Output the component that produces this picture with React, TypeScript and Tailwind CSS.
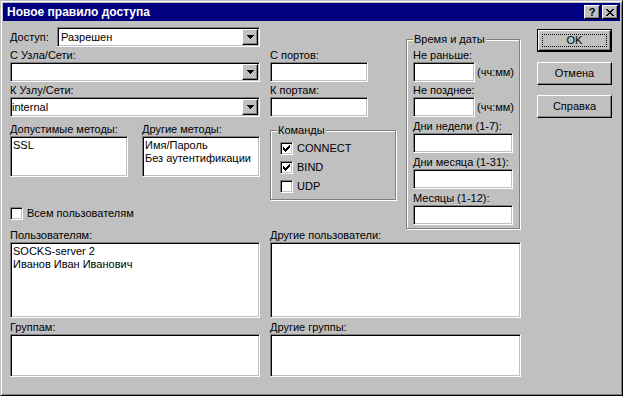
import React from "react";

const SUNKEN =
  "border border-t-[#808080] border-l-[#808080] border-r-white border-b-white shadow-[inset_1px_1px_0_#000,inset_-1px_-1px_0_#c0c0c0] bg-white";
const RAISED =
  "border border-t-white border-l-white border-r-black border-b-black shadow-[inset_-1px_-1px_0_#808080] bg-[#c0c0c0]";
const GROUP =
  "relative border border-[#808080] shadow-[1px_1px_0_#fff,inset_1px_1px_0_#fff]";

function Arrow() {
  return (
    <svg width="7" height="4" viewBox="0 0 7 4" shapeRendering="crispEdges">
      <rect x="0" y="0" width="7" height="1" />
      <rect x="1" y="1" width="5" height="1" />
      <rect x="2" y="2" width="3" height="1" />
      <rect x="3" y="3" width="1" height="1" />
    </svg>
  );
}

function CheckMark() {
  return (
    <svg width="7" height="7" viewBox="0 0 7 7" shapeRendering="crispEdges">
      {[2, 3, 4, 3, 2, 1, 0].map((y, x) => (
        <rect key={x} x={x} y={y} width="1" height="3" />
      ))}
    </svg>
  );
}

function CloseGlyph() {
  const rows: [number, number][][] = [
    [[0, 2], [6, 2]],
    [[1, 2], [5, 2]],
    [[2, 4]],
    [[3, 2]],
    [[2, 4]],
    [[1, 2], [5, 2]],
    [[0, 2], [6, 2]],
  ];
  return (
    <svg width="8" height="7" viewBox="0 0 8 7" shapeRendering="crispEdges">
      {rows.map((r, y) =>
        r.map(([x, w], i) => <rect key={`${y}-${i}`} x={x} y={y} width={w} height="1" />)
      )}
    </svg>
  );
}

function Combo({ className, value, textClass }: { className: string; value?: string; textClass?: string }) {
  return (
    <div className={`${SUNKEN} h-[20px] flex items-stretch p-[1px] ${className}`}>
      <span className={`flex-1 leading-[16px] whitespace-nowrap overflow-hidden ${textClass ?? ""}`}>{value}</span>
      <div className={`${RAISED} w-[16px] flex items-center justify-center`}>
        <Arrow />
      </div>
    </div>
  );
}

function Edit({ className }: { className: string }) {
  return <div className={`${SUNKEN} ${className}`} />;
}

function List({ className, items = [] }: { className: string; items?: string[] }) {
  return (
    <div className={`${SUNKEN} pt-[2px] pl-[2px] ${className}`}>
      {items.map((t) => (
        <div key={t} className="leading-[13px] whitespace-nowrap">
          {t}
        </div>
      ))}
    </div>
  );
}

function Check({ checked, label }: { checked?: boolean; label: string }) {
  return (
    <div className="flex items-center h-[13px]">
      <div className={`${SUNKEN} w-[13px] h-[13px] flex items-center justify-center shrink-0`}>
        {checked && <CheckMark />}
      </div>
      <span className="ml-[4px] leading-[13px] whitespace-nowrap">{label}</span>
    </div>
  );
}

function Label({ children, className = "" }: { children: React.ReactNode; className?: string }) {
  return <div className={`h-[13px] leading-[13px] whitespace-nowrap ${className}`}>{children}</div>;
}

function Button({ children, className = "" }: { children: React.ReactNode; className?: string }) {
  return (
    <div className={`${RAISED} h-[23px] w-[75px] flex items-center justify-center ${className}`}>
      <span className="leading-[13px]">{children}</span>
    </div>
  );
}

export default function App() {
  return (
    <div className="w-[623px] h-[396px] bg-[#c0c0c0] border border-t-[#c0c0c0] border-l-[#c0c0c0] border-r-black border-b-black shadow-[inset_1px_1px_0_#fff,inset_-1px_-1px_0_#808080] p-[2px] flex flex-col text-[11px] text-black font-['Liberation_Sans',Arial,sans-serif] overflow-hidden select-none">
      {/* Title bar */}
      <div className="h-[18px] shrink-0 bg-[#000080] flex items-center pl-[4px] pr-[2px]">
        <span className="flex-1 text-white font-bold text-[12px] leading-[18px] whitespace-nowrap">
          Новое правило доступа
        </span>
        <div className={`${RAISED} w-[16px] h-[14px] flex items-center justify-center`}>
          <span className="font-bold text-[11px] leading-[11px]">?</span>
        </div>
        <div className={`${RAISED} w-[16px] h-[14px] ml-[2px] flex items-center justify-center`}>
          <CloseGlyph />
        </div>
      </div>

      {/* Top section */}
      <div className="flex items-start h-[207px] shrink-0">
        {/* Left column */}
        <div className="ml-[7px] w-[250px] flex flex-col">
          <div className="mt-[6px] flex items-center h-[20px]">
            <span className="w-[47px] whitespace-nowrap">Доступ:</span>
            <Combo className="w-[203px]" value="Разрешен" textClass="pl-[2px]" />
          </div>
          <Label className="mt-[2px]">С Узла/Сети:</Label>
          <Combo className="w-[250px]" />
          <Label className="mt-[2px]">К Узлу/Сети:</Label>
          <Combo className="w-[250px]" value="internal" />
          <div className="mt-[6px] flex gap-[14px]">
            <div className="flex flex-col w-[118px]">
              <Label>Допустимые методы:</Label>
              <List className="h-[41px]" items={["SSL"]} />
            </div>
            <div className="flex flex-col w-[118px]">
              <Label>Другие методы:</Label>
              <List className="h-[41px]" items={["Имя/Пароль", "Без аутентификации"]} />
            </div>
          </div>
          <div className="mt-[30px]">
            <Check label="Всем пользователям" />
          </div>
        </div>

        {/* Middle column */}
        <div className="ml-[10px] w-[126px] flex flex-col">
          <Label className="mt-[28px]">С портов:</Label>
          <Edit className="w-[98px] h-[20px]" />
          <Label className="mt-[2px]">К портам:</Label>
          <Edit className="w-[98px] h-[20px]" />
          <div className={`${GROUP} mt-[13px] h-[70px] w-[126px] pt-[11px] pl-[9px] flex flex-col gap-[6px]`}>
            <span className="absolute left-[6px] top-[-7px] px-[1px] bg-[#c0c0c0] leading-[13px]">Команды</span>
            <Check checked label="CONNECT" />
            <Check checked label="BIND" />
            <Check label="UDP" />
          </div>
        </div>

        {/* Time group */}
        <div className={`${GROUP} ml-[10px] mt-[18px] w-[114px] h-[190px] pt-[9px] pl-[6px] flex flex-col`}>
          <span className="absolute left-[6px] top-[-7px] px-[1px] bg-[#c0c0c0] leading-[13px]">Время и даты</span>
          <Label>Не раньше:</Label>
          <div className="flex items-center">
            <Edit className="w-[62px] h-[20px]" />
            <span className="ml-[2px] whitespace-nowrap">(чч:мм)</span>
          </div>
          <Label className="mt-[2px]">Не позднее:</Label>
          <div className="flex items-center">
            <Edit className="w-[62px] h-[20px]" />
            <span className="ml-[2px] whitespace-nowrap">(чч:мм)</span>
          </div>
          <Label className="mt-[3px]">Дни недели (1-7):</Label>
          <Edit className="w-[100px] h-[20px]" />
          <Label className="mt-[3px]">Дни месяца (1-31):</Label>
          <Edit className="w-[100px] h-[20px]" />
          <Label className="mt-[3px]">Месяцы (1-12):</Label>
          <Edit className="w-[100px] h-[20px]" />
        </div>

        {/* Buttons */}
        <div className="ml-[17px] w-[75px] mt-[8px] flex flex-col gap-[10px]">
          <div className="border border-black">
            <div className={`${RAISED} h-[21px] w-[73px] flex items-center justify-center p-[3px]`}>
              <div className="w-full h-full border border-dotted border-black flex items-center justify-center">
                <span className="leading-[13px]">OK</span>
              </div>
            </div>
          </div>
          <Button>Отмена</Button>
          <Button>Справка</Button>
        </div>
      </div>

      {/* Bottom section */}
      <div className="flex items-start mt-[1px]">
        <div className="ml-[7px] w-[250px] flex flex-col">
          <Label>Пользователям:</Label>
          <List className="h-[76px]" items={["SOCKS-server 2", "Иванов Иван Иванович"]} />
          <Label className="mt-[3px]">Группам:</Label>
          <List className="h-[43px]" />
        </div>
        <div className="ml-[10px] w-[251px] flex flex-col">
          <Label>Другие пользователи:</Label>
          <List className="h-[76px]" />
          <Label className="mt-[3px]">Другие группы:</Label>
          <List className="h-[43px]" />
        </div>
      </div>
    </div>
  );
}
